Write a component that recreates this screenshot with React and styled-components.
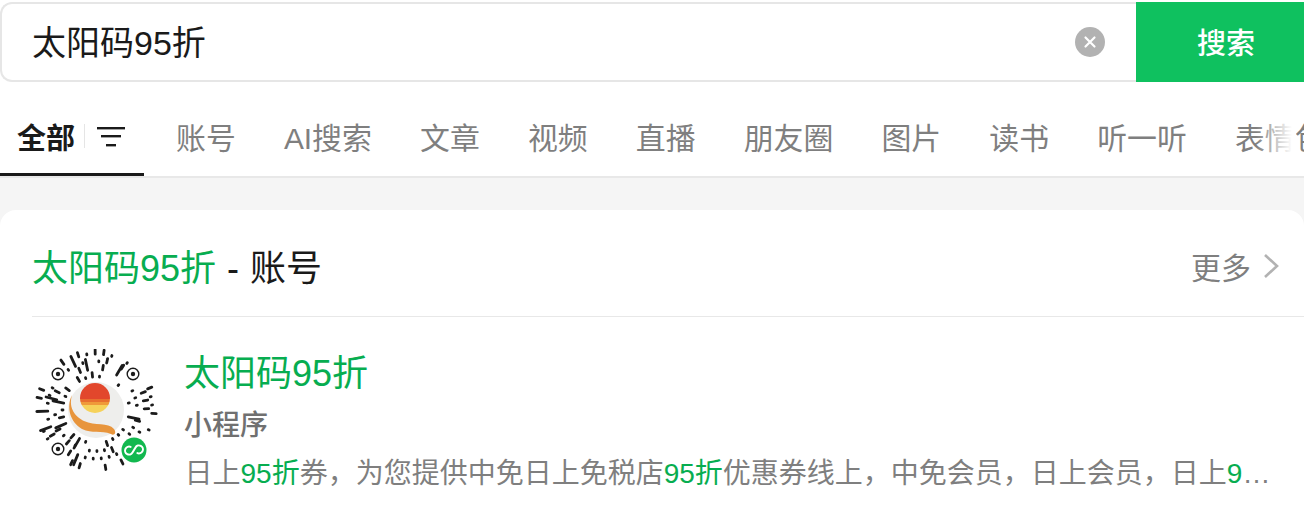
import React from 'react'
import styled, { createGlobalStyle } from 'styled-components'

const tabs = ['账号', 'AI搜索', '文章', '视频', '直播', '朋友圈', '图片', '读书', '听一听', '表情包']

// spokes of the mini program code: angle, start radius, length
const spokes = []
const CX = 96
const CY = 71
const MAX_R = 61
for (let ring = 0; ring < 4; ring++) {
  const count = 30 + ring * 4
  for (let i = 0; i < count; i++) {
    const seed = Math.sin(i * 12.9898 + ring * 78.233) * 43758.5453
    const rnd = seed - Math.floor(seed)
    if (rnd < 0.35) continue
    const angle = (i / count) * Math.PI * 2 + ring * 0.07
    const r = 33 + ring * 7.6
    const len = rnd > 0.86 ? 11 : rnd > 0.6 ? 4.5 : 1
    spokes.push({ angle, r, len: Math.min(len, MAX_R - r) })
  }
}

const eyes = [
  { x: 58, y: 35 },
  { x: 133, y: 35 },
  { x: 58, y: 110 }
]

const isNearEye = (x, y) => {
  const near = eyes.some(e => Math.hypot(e.x - x, e.y - y) < 9.5)
  return near || Math.hypot(x - 134, y - 111) < 15
}

const QrCode = () => (
  <svg width="128" height="124" viewBox="32 10 128 124">
    <g stroke="#1b1b1b" strokeWidth="2.800" strokeLinecap="round">
      {spokes.map((s, i) => {
        const x1 = CX + Math.cos(s.angle) * s.r
        const y1 = CY + Math.sin(s.angle) * s.r
        const x2 = CX + Math.cos(s.angle) * (s.r + s.len)
        const y2 = CY + Math.sin(s.angle) * (s.r + s.len)
        if (isNearEye(x1, y1) || isNearEye(x2, y2)) return null
        return <line key={i} x1={x1} y1={y1} x2={x2} y2={y2} />
      })}
    </g>
    {eyes.map((e, i) => (
      <g key={i}>
        <circle cx={e.x} cy={e.y} r="5.800" fill="none" stroke="#1b1b1b" strokeWidth="1.400" />
        <circle cx={e.x} cy={e.y} r="2.200" fill="#1b1b1b" />
      </g>
    ))}
    <circle cx={CX} cy={CY} r="28" fill="#eeeeec" />
    <defs>
      <clipPath id="sun">
        <circle cx="95" cy="59" r="15" />
      </clipPath>
    </defs>
    <g clipPath="url(#sun)">
      <rect x="78" y="42" width="36" height="18" fill="#e2472c" />
      <rect x="78" y="60" width="36" height="3" fill="#e8702f" />
      <rect x="78" y="63" width="36" height="3" fill="#ef9a3a" />
      <rect x="78" y="66" width="36" height="9" fill="#f6d25a" />
    </g>
    <path
      d="M72 56 C68 70 76 78 84 82 C95 87 108 83 114 90 C117 94 114 97 111 95 C101 91 92 95 82 90 C70 83 66 68 72 56 Z"
      fill="#e8953c"
    />
    <circle cx="134" cy="111" r="12.500" fill="#12b84f" />
    <path
      d="M129.500 110 a4 4 0 1 0 4.500 4 v-6 a4 4 0 1 1 4.500 4"
      fill="none"
      stroke="#fff"
      strokeWidth="2"
      strokeLinecap="round"
      transform="rotate(30 134 111)"
    />
  </svg>
)

const App = () => {
  return (
    <Page>
      <GlobalStyle />
      <SearchBar>
        <InputBox>
          <Query>太阳码95折</Query>
          <ClearBtn>
            <svg width="14" height="14" viewBox="0 0 14 14">
              <path d="M2.500 2.500 L11.500 11.500 M11.500 2.500 L2.500 11.500" stroke="#fff" strokeWidth="2.200" strokeLinecap="round" />
            </svg>
          </ClearBtn>
        </InputBox>
        <SearchBtn>搜索</SearchBtn>
      </SearchBar>

      <TabBar>
        <ActiveTab>
          全部
          <Divider />
          <FilterIcon width="28" height="20" viewBox="0 0 28 20">
            <rect x="0" y="0" width="28" height="2.400" fill="#1a1a1a" />
            <rect x="4" y="8" width="20" height="2.400" fill="#1a1a1a" />
            <rect x="9" y="17" width="10" height="2.400" fill="#1a1a1a" />
          </FilterIcon>
        </ActiveTab>
        {tabs.map(t => (
          <Tab key={t}>{t}</Tab>
        ))}
        <Fade />
      </TabBar>

      <Band>
        <Card>
          <CardHead>
            <HeadTitle>
              <Green>太阳码95折</Green> - 账号
            </HeadTitle>
            <More>
              更多
              <svg width="18" height="26" viewBox="0 0 18 26">
                <path d="M3 2 L15 13 L3 24" fill="none" stroke="#b2b2b2" strokeWidth="2.600" />
              </svg>
            </More>
          </CardHead>
          <Result>
            <QrWrap>
              <QrCode />
            </QrWrap>
            <Info>
              <ResultTitle>太阳码95折</ResultTitle>
              <Kind>小程序</Kind>
              <Desc>
                日上<Hl>95折</Hl>券，为您提供中免日上免税店<Hl>95折</Hl>优惠券线上，中免会员，日上会员，日上<Hl>95折</Hl>优惠券
              </Desc>
            </Info>
          </Result>
        </Card>
      </Band>
    </Page>
  )
}

const GlobalStyle = createGlobalStyle`
  html, body {
    margin: 0;
    padding: 0;
    background: #f5f5f5;
  }
  body {
    font-family: "Liberation Sans", "Noto Sans CJK SC", sans-serif;
  }
`

const Page = styled.div`
  width: 1304px;
  height: 516px;
  overflow: hidden;
  background: #f5f5f5;
`

const SearchBar = styled.div`
  display: flex;
  height: 82px;
  padding-top: 2px;
  box-sizing: border-box;
  background: #fff;
`

const InputBox = styled.div`
  flex: 1;
  display: flex;
  align-items: center;
  justify-content: space-between;
  padding: 0 31px 0 30px;
  box-sizing: border-box;
  border: 2px solid #e6e6e6;
  border-right: 0;
  border-radius: 12px 0 0 12px;
`

const Query = styled.div`
  font-size: 34px;
  color: #1a1a1a;
  padding-bottom: 4px;
`

const ClearBtn = styled.div`
  width: 30px;
  height: 30px;
  border-radius: 50%;
  background: #b2b2b2;
  display: flex;
  align-items: center;
  justify-content: center;
`

const SearchBtn = styled.div`
  width: 168px;
  box-sizing: border-box;
  padding: 0 0 2px 12px;
  display: flex;
  align-items: center;
  justify-content: center;
  background: #0fc15f;
  color: #fff;
  font-size: 29px;
  font-weight: 500;
`

const TabBar = styled.div`
  position: relative;
  display: flex;
  align-items: stretch;
  height: 96px;
  box-sizing: border-box;
  background: #fff;
  border-bottom: 2px solid #e8e8e8;
  overflow: hidden;
`

const ActiveTab = styled.div`
  width: 144px;
  flex: none;
  box-sizing: border-box;
  padding: 16px 0 0 17px;
  display: flex;
  align-items: center;
  font-size: 29px;
  font-weight: 700;
  color: #1a1a1a;
  border-bottom: 3px solid #1a1a1a;
`

const Divider = styled.span`
  width: 1px;
  height: 24px;
  margin: 0 12px 0 9px;
  background: #e5e5e5;
`

const FilterIcon = styled.svg`
  flex: none;
  margin-top: 2px;
`

const Tab = styled.div`
  flex: none;
  display: flex;
  align-items: center;
  margin: 0 16.1px 0 32px;
  padding-top: 14px;
  font-size: 29.9px;
  color: #7f7f7f;
  white-space: nowrap;
`

const Fade = styled.div`
  position: absolute;
  top: 0;
  right: 8px;
  bottom: 0;
  width: 40px;
  background: linear-gradient(to right, rgba(255, 255, 255, 0), #fff 90%);
`

const Band = styled.div`
  padding-top: 32px;
`

const Card = styled.div`
  background: #fff;
  border-radius: 16px 16px 0 0;
  padding-left: 32px;
  height: 306px;
  box-sizing: border-box;
`

const CardHead = styled.div`
  display: flex;
  align-items: center;
  justify-content: space-between;
  height: 107px;
  box-sizing: border-box;
  padding: 4px 24px 0 0;
  border-bottom: 1px solid #e8e8e8;
`

const HeadTitle = styled.div`
  font-size: 36px;
  color: #1a1a1a;
  word-spacing: 1px;
`

const Green = styled.span`
  color: #07ad50;
`

const More = styled.div`
  display: flex;
  align-items: center;
  gap: 11px;
  margin-top: 2px;
  font-size: 30px;
  color: #7f7f7f;
`

const Result = styled.div`
  display: flex;
  padding: 32px 24px 0 0;
`

const QrWrap = styled.div`
  width: 151px;
  flex: none;
  line-height: 0;
`

const Info = styled.div`
  min-width: 0;
  flex: 1;
`

const ResultTitle = styled.div`
  margin-left: 1px;
  font-size: 36px;
  line-height: 50px;
  color: #07ad50;
`

const Kind = styled.div`
  margin: 7px 0 0 1px;
  font-size: 28px;
  line-height: 40px;
  font-weight: 500;
  color: #707070;
`

const Desc = styled.div`
  margin: 8px 0 0 1.5px;
  font-size: 28px;
  line-height: 40px;
  color: #7f7f7f;
  white-space: nowrap;
  overflow: hidden;
  text-overflow: ellipsis;
`

const Hl = styled.span`
  color: #07ad50;
`

export default App
